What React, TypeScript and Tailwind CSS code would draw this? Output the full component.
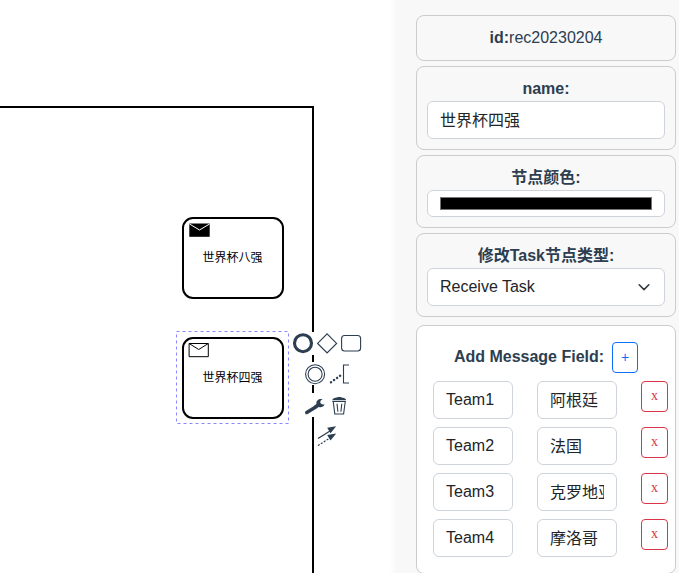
import type { ReactNode } from 'react';

const fields = [
  ['Team1', '阿根廷'],
  ['Team2', '法国'],
  ['Team3', '克罗地亚'],
  ['Team4', '摩洛哥'],
];

const inputBase =
  'block rounded-md border border-[#ced4da] bg-white px-3 text-base leading-6 text-[#212529] outline-none';

function Card({ children, className = '' }: { children: ReactNode; className?: string }) {
  return (
    <section className={`rounded-lg border border-[#cccccc] px-2.5 ${className}`}>{children}</section>
  );
}

function Task({ label, filled, className }: { label: string; filled?: boolean; className: string }) {
  return (
    <div
      className={`absolute flex h-[82px] w-[102px] items-center justify-center rounded-[11px] border-2 border-black bg-white text-xs leading-none text-black ${className}`}
    >
      <svg className="absolute top-1 left-1" width="24" height="16" fill="none">
        {filled ? (
          <>
            <path d="M1.3 .5h20.4v13.3H1.3z" fill="black" />
            <path d="M1.5 1l10 6 10-6" stroke="white" />
          </>
        ) : (
          <path d="M1.1 .5h19.2v13.2H1.1zl9.6 6 9.6-6" stroke="black" strokeWidth="1" />
        )}
      </svg>
      <span className="pr-px">{label}</span>
    </div>
  );
}

function ContextPad() {
  return (
    <svg
      className="absolute top-[332px] left-[292px]"
      width="74"
      height="116"
      fill="none"
      stroke="#2c3e50"
    >
      <path d="M0 0h72v23H0zM12 30h48v23H12zM12 61h48v24H12zM24 92h24v22H24z" fill="white" stroke="none" />
      <circle cx="11" cy="11.2" r="8.5" strokeWidth="3.1" />
      <path d="M35.1 1.9l9.5 9.5-9.5 9.5-9.5-9.5z" strokeWidth="1.2" />
      <rect x="49.6" y="3.5" width="19" height="15.5" rx="3" strokeWidth="1.1" />
      <circle cx="23.1" cy="42.2" r="9.5" strokeWidth="1.1" />
      <circle cx="23.1" cy="42.2" r="7" strokeWidth="1.1" />
      <path d="M39 50.2l12-8.5" strokeWidth="2.4" strokeLinecap="round" strokeDasharray="0.1 3.6" />
      <path d="M57 33h-5.5v18H57" strokeWidth="1.1" />
      <path d="M14.8 80.5l9.3-5.8" strokeWidth="3.5" strokeLinecap="round" />
      <path
        d="M23.6 76.5l3.2-1.6c2 .8 5.3-.2 5.8-2.7-2.3.6-4.1-.1-4.3-1.9-.1-1.5.8-2.6 2.4-3.1-3.6-1-6.8 1.3-6.3 4.7l-2.5 2z"
        fill="#2c3e50"
        stroke="none"
      />
      <path d="M40.3 68c.2-1.6 2.8-2.2 4-2.2 0-1.2 5.8-1.2 5.8 0 1.4 0 3.8.6 4 2.2z" fill="#2c3e50" stroke="none" />
      <path d="M40.3 69.4h13.6M41.3 70l1.5 12h8.8L53.2 70M45 71.8l.9 8M49.8 71.8l-.9 8" strokeWidth="1.1" />
      <path d="M26 106.5l12-7.5" strokeWidth="1.3" />
      <path d="M26 113.5l12-7.5" strokeWidth="1.2" strokeDasharray="2 1.4" />
      <path d="M44.2 94.3l-9 1.4 3.3 5.6zM44.2 101.5l-9 1.4 3.3 5.6z" fill="#2c3e50" stroke="none" />
    </svg>
  );
}

export default function App() {
  return (
    <main className="flex h-[573px] w-[679px] overflow-hidden bg-white font-['Liberation_Sans','Noto_Sans_CJK_SC',sans-serif]">
      <div className="relative w-[390px] shrink-0">
        <div className="absolute top-[106px] left-0 h-[480px] w-[314px] border-t-2 border-r-2 border-black" />
        <Task label="世界杯八强" filled className="top-[217px] left-[182px]" />
        <Task label="世界杯四强" className="top-[337px] left-[182px]" />
        <svg className="absolute top-[331px] left-[176px]" width="114" height="94" fill="none">
          <rect x=".5" y=".5" width="112" height="92" stroke="#8888ff" strokeDasharray="3 3" />
        </svg>
        <ContextPad />
      </div>
      <div className="w-1.5 shrink-0 bg-linear-to-r from-white to-[#f8f8f8]" />
      <aside className="w-[283px] shrink-0 bg-[#f8f8f8] pt-[15px] pl-5 text-center text-base leading-6 text-[#2c3e50]">
        <div className="flex w-[260px] flex-col gap-[5px]">
          <Card className="h-[46px] pt-2.5">
            <b>id:</b>rec20230204
          </Card>
          <Card className="h-[84px] pt-2.5">
            <b className="block">name:</b>
            <input className={`${inputBase} h-[38px] w-[238px] pb-[3px]`} defaultValue="世界杯四强" />
          </Card>
          <Card className="h-[73px] pt-2.5">
            <b className="block">节点颜色:</b>
            <div className={`${inputBase} flex h-[27px] w-[238px] items-center`}>
              <div className="h-[13px] w-full border border-[#777777] bg-black" />
            </div>
          </Card>
          <Card className="h-[84px] pt-2.5">
            <b className="block">修改Task节点类型:</b>
            <div className={`${inputBase} flex h-[38px] w-[238px] items-center justify-between`}>
              <span>Receive Task</span>
              <svg width="16" height="16" viewBox="0 0 16 16" fill="none">
                <path d="M3.2 5.8L8 10.6l4.8-4.8" stroke="#343a40" strokeWidth="1.6" strokeLinecap="round" strokeLinejoin="round" />
              </svg>
            </div>
          </Card>
          <Card className="mt-[3px] h-[249px] bg-white pt-4">
            <div className="mb-2 flex h-[31px] items-center justify-center gap-2">
              <b className="pb-0.5">Add Message Field:</b>
              <button className="flex h-[31px] w-[26px] items-center justify-center rounded border border-[#0d6efd] text-sm text-[#0d6efd]">
                <span className="-mt-px">+</span>
              </button>
            </div>
            <div className="flex flex-col gap-2 pl-1.5">
              {fields.map(([name, value]) => (
                <div key={name} className="flex items-start gap-6">
                  <input className={`${inputBase} h-[38px] w-20`} defaultValue={name} />
                  <input className={`${inputBase} h-[38px] w-20 pb-[3px]`} defaultValue={value} />
                  <button className="flex h-[31px] w-[27px] shrink-0 items-center justify-center rounded border border-[#dc3545] font-['Liberation_Serif',serif] text-sm text-[#dc3545]">
                    <span className="-mt-px">x</span>
                  </button>
                </div>
              ))}
            </div>
          </Card>
        </div>
      </aside>
    </main>
  );
}
